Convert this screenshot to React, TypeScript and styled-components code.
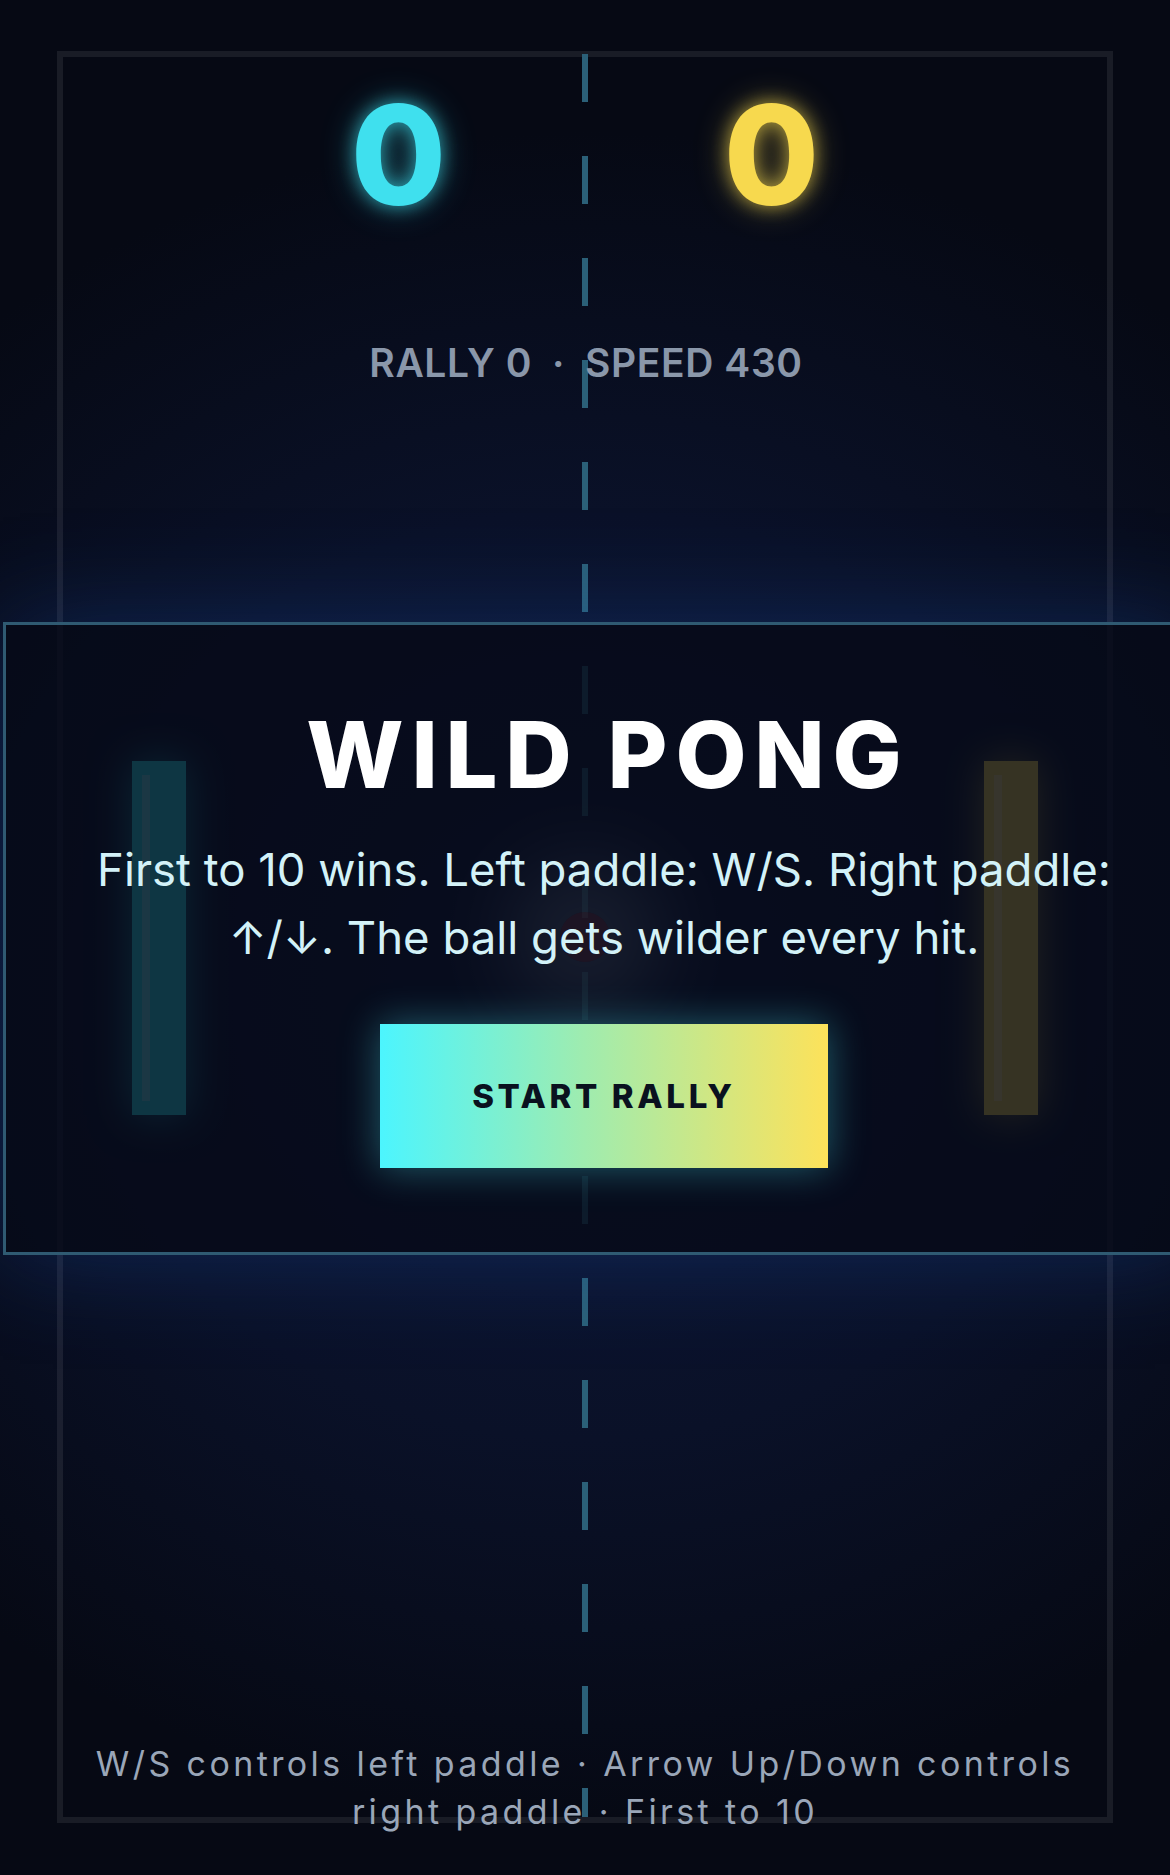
import React from 'react'
import styled, { createGlobalStyle } from 'styled-components'

const GlobalStyle = createGlobalStyle`
  html, body {
    margin: 0;
    padding: 0;
    background: #070b1a;
    overflow: hidden;
  }
  body {
    font-family: Inter, 'Noto Sans', 'DejaVu Sans', sans-serif;
    -webkit-font-smoothing: antialiased;
  }
`

const Page = styled.div`
  position: relative;
  width: 1170px;
  height: 1875px;
  box-sizing: border-box;
  padding: 51px 57px 52px;
  overflow: hidden;
  background: radial-gradient(
    ellipse 80% 45% at 50% 52%,
    #0d1738 0%,
    #0a1128 55%,
    #060914 100%
  );
`

const Court = styled.div`
  position: relative;
  height: 100%;
  box-sizing: border-box;
  border: 6px solid rgba(255, 255, 255, 0.08);
  display: flex;
  flex-direction: column;
  align-items: center;
`

const CenterLine = styled.div`
  position: absolute;
  top: -3px;
  bottom: 0;
  left: calc(50% - 3px);
  width: 6px;
  background: repeating-linear-gradient(
    to bottom,
    #2b6078 0px,
    #2b6078 48px,
    transparent 48px,
    transparent 102px
  );
`

const Scoreboard = styled.div`
  display: flex;
  justify-content: center;
  gap: 250px;
  padding-top: 29px;
  position: relative;
`

const Score = styled.div<{ $color: string }>`
  width: 123px;
  text-align: center;
  font-size: 138px;
  line-height: 1;
  font-weight: 800;
  color: ${(p) => p.$color};
  text-shadow: 0 0 18px ${(p) => p.$color}aa, 0 0 36px ${(p) => p.$color}55;
`

const Stats = styled.div`
  display: flex;
  align-items: center;
  gap: 20px;
  margin-top: 119px;
  margin-left: 2px;
  font-size: 39px;
  line-height: 1;
  font-weight: 600;
  letter-spacing: 0.015em;
  color: #8a97aa;
  position: relative;
`

const Paddle = styled.div<{ $side: 'left' | 'right'; $color: string }>`
  position: absolute;
  top: 704px;
  ${(p) => p.$side}: 69px;
  width: 54px;
  height: 354px;
  background: ${(p) => p.$color};
  box-shadow: 0 0 40px ${(p) => p.$color}99;

  &::after {
    content: '';
    position: absolute;
    left: 10px;
    top: 14px;
    bottom: 14px;
    width: 8px;
    background: rgba(255, 255, 255, 0.3);
  }
`

const Ball = styled.div`
  position: absolute;
  top: calc(50% - 25px);
  left: calc(50% - 25px);
  width: 50px;
  height: 50px;
  border-radius: 50%;
  background: rgba(255, 110, 110, 0.45);
  box-shadow: 0 0 80px 50px rgba(210, 235, 255, 0.4);
`

const Overlay = styled.div`
  position: absolute;
  left: 3px;
  top: 622px;
  width: 1202px;
  height: 633px;
  box-sizing: border-box;
  border: 3px solid #2f5a72;
  background: rgba(6, 10, 24, 0.8);
  box-shadow: 0 0 100px rgba(30, 90, 190, 0.3);
  display: flex;
  flex-direction: column;
  align-items: center;
  justify-content: center;
  text-align: center;
`

const Title = styled.h1`
  margin: 0;
  font-size: 92px;
  line-height: 1;
  font-weight: 800;
  letter-spacing: 0.085em;
  margin-right: -0.085em;
  color: #ffffff;
`

const Blurb = styled.p`
  margin: 35px 0 0;
  width: 1060px;
  font-size: 45.5px;
  line-height: 68px;
  font-weight: 400;
  color: #d3f2f8;
`

const NoWrap = styled.span`
  white-space: nowrap;
`

const StartButton = styled.button`
  margin-top: 52px;
  width: 448px;
  height: 144px;
  border: none;
  border-radius: 0;
  background: linear-gradient(90deg, #4cf5fe 0%, #9eecb0 45%, #fde25a 100%);
  box-shadow: 0 0 36px rgba(76, 245, 254, 0.35);
  font-family: inherit;
  font-size: 33px;
  font-weight: 800;
  letter-spacing: 0.11em;
  color: #0a111f;
  cursor: pointer;
`

const Footer = styled.div`
  position: absolute;
  left: 0;
  right: 0;
  bottom: 39px;
  display: flex;
  justify-content: center;
`

const FooterText = styled.p`
  margin: 0;
  width: 1040px;
  text-align: center;
  font-size: 34px;
  line-height: 48px;
  letter-spacing: 0.1em;
  color: #9aa6b8;
`

export default function App() {
  return (
    <>
      <GlobalStyle />
      <Page>
        <Court>
          <CenterLine />
          <Paddle $side="left" $color="#2ee4f0" />
          <Paddle $side="right" $color="#f5d650" />
          <Ball />
          <Scoreboard>
            <Score $color="#3fe0ee">0</Score>
            <Score $color="#f7d94e">0</Score>
          </Scoreboard>
          <Stats>
            <span>RALLY 0</span>
            <span>·</span>
            <span>SPEED 430</span>
          </Stats>
        </Court>
        <Overlay>
          <Title>WILD PONG</Title>
          <Blurb>
            First to 10 wins. Left paddle: W/S. Right paddle: <NoWrap>↑/↓.</NoWrap> The ball gets
            wilder every hit.
          </Blurb>
          <StartButton>START RALLY</StartButton>
        </Overlay>
        <Footer>
          <FooterText>
            W/S controls left paddle · Arrow Up/Down controls right paddle · First to 10
          </FooterText>
        </Footer>
      </Page>
    </>
  )
}
